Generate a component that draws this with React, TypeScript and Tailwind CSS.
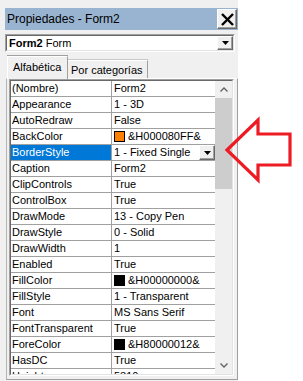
import React from "react";

type Row = { name: string; value: string; swatch?: string; selected?: boolean };

const rows: Row[] = [
  { name: "(Nombre)", value: "Form2" },
  { name: "Appearance", value: "1 - 3D" },
  { name: "AutoRedraw", value: "False" },
  { name: "BackColor", value: "&H000080FF&", swatch: "#ff8000" },
  { name: "BorderStyle", value: "1 - Fixed Single", selected: true },
  { name: "Caption", value: "Form2" },
  { name: "ClipControls", value: "True" },
  { name: "ControlBox", value: "True" },
  { name: "DrawMode", value: "13 - Copy Pen" },
  { name: "DrawStyle", value: "0 - Solid" },
  { name: "DrawWidth", value: "1" },
  { name: "Enabled", value: "True" },
  { name: "FillColor", value: "&H00000000&", swatch: "#000000" },
  { name: "FillStyle", value: "1 - Transparent" },
  { name: "Font", value: "MS Sans Serif" },
  { name: "FontTransparent", value: "True" },
  { name: "ForeColor", value: "&H80000012&", swatch: "#000000" },
  { name: "HasDC", value: "True" },
  { name: "Height", value: "5310" },
];

function DownTri() {
  return (
    <svg width="7" height="4" viewBox="0 0 7 4">
      <polygon points="0,0 7,0 3.5,4" fill="#000" />
    </svg>
  );
}

function RaisedBtn({ className, children }: { className: string; children?: React.ReactNode }) {
  return (
    <div
      className={
        "flex items-center justify-center bg-[#f0f0f0] border-t border-l border-white border-r border-b border-r-[#696969] border-b-[#696969] shadow-[inset_-1px_-1px_0_#a0a0a0] " +
        className
      }
    >
      {children}
    </div>
  );
}

export default function App() {
  return (
    <div className="relative w-[303px] h-[381px] bg-white overflow-hidden font-['Liberation_Sans',Arial,sans-serif] text-black">
      <div className="w-[238px] h-full bg-[#f0f0f0] flex flex-col pt-[8px]">
        {/* Title bar */}
        <div className="ml-[5px] w-[233px] h-[22px] bg-[#99b4d1] flex items-center justify-between pl-[2px] pr-[1px]">
          <span className="text-[12px] leading-none">Propiedades - Form2</span>
          <RaisedBtn className="w-[20px] h-[20px]">
            <svg width="13" height="13" viewBox="0 0 13 13">
              <line x1="1" y1="1" x2="12" y2="12" stroke="#000" strokeWidth="2.4" />
              <line x1="12" y1="1" x2="1" y2="12" stroke="#000" strokeWidth="2.4" />
            </svg>
          </RaisedBtn>
        </div>

        {/* Combo */}
        <div className="mt-[4px] ml-[5px] w-[230px] h-[18px] border border-t-[#a0a0a0] border-l-[#a0a0a0] border-r-white border-b-white">
          <div className="w-full h-full bg-white flex items-center justify-between border border-t-[#696969] border-l-[#696969] border-r-[#e3e3e3] border-b-[#e3e3e3]">
            <span className="text-[11px] leading-none pl-[2px]">
              <b>Form2</b> Form
            </span>
            <RaisedBtn className="w-[16px] h-[14px]">
              <DownTri />
            </RaisedBtn>
          </div>
        </div>

        {/* Tabs */}
        <div className="mt-[4px] ml-[7px] h-[22px] flex items-end relative z-10">
          <div className="w-[61px] h-[23px] -mb-px bg-[#f0f0f0] border-t border-l border-white border-r border-r-[#a0a0a0] shadow-[0_-1px_0_#a0a0a0] flex items-start pt-[5px] pl-[5px] text-[11px] leading-none">
            Alfabética
          </div>
          <div className="w-[80px] h-[18px] bg-[#f0f0f0] border-t border-white border-r border-r-[#a0a0a0] shadow-[0_-1px_0_#c8c8c8] flex items-start pt-[4px] pl-[3px] text-[11px] leading-none">
            Por categorías
          </div>
        </div>

        {/* Tab panel */}
        <div className="ml-[6px] w-[232px] h-[302px] border border-t-white border-l-[#b4b4b4] border-r-[#a0a0a0] border-b-[#a0a0a0] pl-[2px] pr-[3px] pb-[2px]">
          <div className="w-[225px] h-[297px] border border-t-[#a0a0a0] border-l-[#a0a0a0] border-r-white border-b-white">
            <div className="w-full h-full bg-white flex border border-t-[#696969] border-l-[#696969] border-r-[#e3e3e3] border-b-[#e3e3e3] overflow-hidden">
              {/* rows */}
              <div className="w-[204px] flex flex-col">
                {rows.map((r) => (
                  <div key={r.name} className="h-[16px] shrink-0 flex border-b border-[#a0a0a0] text-[11px] leading-none">
                    <div
                      className={
                        "w-[101px] shrink-0 border-r border-[#a0a0a0] flex items-center pl-[1px] " +
                        (r.selected ? "bg-[#0078d7] text-white" : "")
                      }
                    >
                      {r.name}
                    </div>
                    <div className="flex-1 flex items-center pl-[2px] relative">
                      {r.swatch && (
                        <span
                          className="w-[11px] h-[11px] border border-black mr-[3px] shrink-0"
                          style={{ backgroundColor: r.swatch }}
                        />
                      )}
                      <span>{r.value}</span>
                      {r.selected && (
                        <RaisedBtn className="absolute right-0 top-0 w-[16px] h-[15px]">
                          <DownTri />
                        </RaisedBtn>
                      )}
                    </div>
                  </div>
                ))}
              </div>
              {/* scrollbar */}
              <div className="w-[17px] bg-[#f0f0f0] flex flex-col">
                <div className="h-[17px] flex items-center justify-center">
                  <svg width="8" height="5" viewBox="0 0 8 5">
                    <polyline points="0.5,4.5 4,1 7.5,4.5" fill="none" stroke="#606060" strokeWidth="1.3" />
                  </svg>
                </div>
                <div className="h-[91px] bg-[#cdcdcd]" />
                <div className="flex-1" />
                <div className="h-[17px] flex items-center justify-center">
                  <svg width="8" height="5" viewBox="0 0 8 5">
                    <polyline points="0.5,0.5 4,4 7.5,0.5" fill="none" stroke="#606060" strokeWidth="1.3" />
                  </svg>
                </div>
              </div>
            </div>
          </div>
        </div>
      </div>

      {/* Red arrow overlay */}
      <svg className="absolute left-0 top-0 pointer-events-none" width="303" height="381" viewBox="0 0 303 381">
        <polygon
          points="227,150 258,120 258,134 290,134 290,165 258,165 258,180"
          fill="none"
          stroke="#ed1c24"
          strokeWidth="3.2"
          strokeLinejoin="miter"
        />
      </svg>
    </div>
  );
}
